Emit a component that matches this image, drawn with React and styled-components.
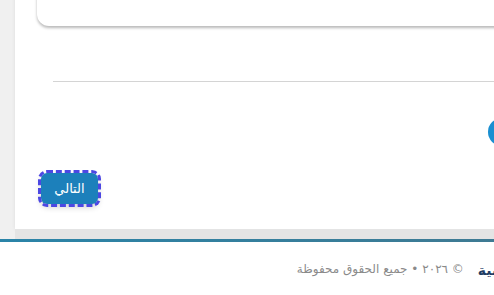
import React from 'react';
import styled, { createGlobalStyle } from 'styled-components';

const GlobalStyle = createGlobalStyle`
  html, body {
    margin: 0;
    padding: 0;
    overflow: hidden;
    background: #fff;
    font-family: "DejaVu Sans", "Noto Sans", sans-serif;
  }
`;

const Page = styled.div`
  width: 600px;
  min-height: 100vh;
  background: #fff;
`;

const Main = styled.main`
  padding: 0 15px;
  background: #f0f0f0;
`;

const Panel = styled.section`
  background: #fff;
  margin-top: -60px;
  padding: 0 22px 25px 22px;
  height: 289px;
  box-sizing: border-box;
  display: flex;
  flex-direction: column;
  box-shadow: 0 0 4px rgba(0, 0, 0, 0.08);
`;

const Card = styled.div`
  height: 86px;
  flex-shrink: 0;
  background: #fff;
  border-radius: 0 0 12px 12px;
  box-shadow: 0 2px 3px rgba(0, 0, 0, 0.28);
`;

const Divider = styled.hr`
  margin: 55px 16px 0 16px;
  border: none;
  border-top: 1px solid #d4d4d4;
`;

const StepRow = styled.div`
  display: flex;
  justify-content: flex-end;
  padding: 36px 47px 0 0;
`;

const StepDot = styled.span`
  width: 28px;
  height: 28px;
  border-radius: 50%;
  background: #1a8fd1;
`;

const Actions = styled.div`
  margin-top: auto;
  display: flex;
  justify-content: flex-start;
  padding-left: 4px;
`;

const NextButton = styled.button`
  direction: rtl;
  width: 57px;
  height: 31px;
  background: #1c80bb;
  color: #fff;
  border: none;
  border-radius: 6px;
  outline: 3px dashed #4c47e3;
  outline-offset: 0;
  font-family: inherit;
  font-size: 13px;
  font-weight: normal;
  box-shadow: 0 3px 6px rgba(0, 0, 0, 0.2);
  cursor: pointer;
`;

const Band = styled.div`
  height: 10px;
  background: #e4e4e4;
`;

const Footer = styled.footer`
  background: #fff;
  border-top: 3px solid #2f7b9e;
  border-image: linear-gradient(90deg, #2a84a8, #43788e) 1;
  height: 56px;
  display: flex;
  align-items: center;
  justify-content: flex-end;
  gap: 14px;
  padding-right: 76px;
`;

const Copy = styled.span`
  direction: rtl;
  font-size: 12px;
  color: #8a8a8a;
  padding-bottom: 2px;
`;

const Lang = styled.span`
  direction: rtl;
  font-size: 14px;
  color: #1f3d63;
  font-weight: 600;
`;

export default function App() {
  return (
    <Page>
      <GlobalStyle />
      <Main>
        <Panel>
          <Card />
          <Divider />
          <StepRow>
            <StepDot />
          </StepRow>
          <Actions>
            <NextButton>التالي</NextButton>
          </Actions>
        </Panel>
        <Band />
      </Main>
      <Footer>
        <Copy>© ٢٠٢٦ • جميع الحقوق محفوظة</Copy>
        <Lang>العربية</Lang>
      </Footer>
    </Page>
  );
}
